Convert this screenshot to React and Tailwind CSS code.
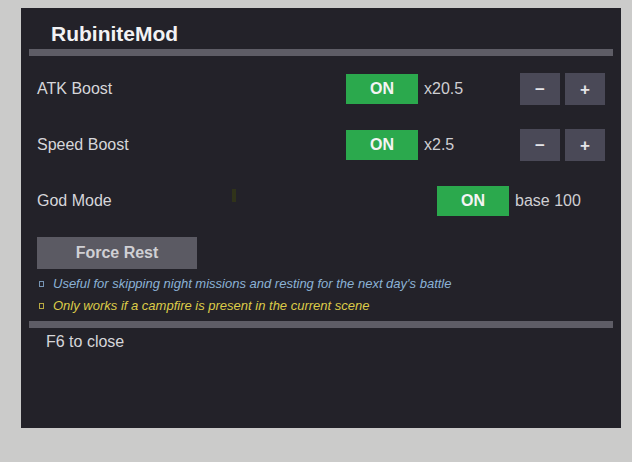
import React, { useState } from "react";

const font = { fontFamily: '"Liberation Sans", Arial, sans-serif' };

const StepButton = ({ label, onClick }) => (
  <button
    type="button"
    onClick={onClick}
    className="flex h-8 w-10 items-center justify-center bg-[#4a4957] text-[17px] font-bold leading-none text-[#e4e4e8]"
  >
    {label}
  </button>
);

const Toggle = ({ on, onClick }) => (
  <button
    type="button"
    onClick={onClick}
    className={`flex h-[30px] w-[72px] items-center justify-center text-[16px] font-bold text-[#f4f4f4] ${
      on ? "bg-[#2ba94d]" : "bg-[#5b5a63]"
    }`}
  >
    {on ? "ON" : "OFF"}
  </button>
);

const BoostRow = ({ label, value, step }) => {
  const [on, setOn] = useState(true);
  const [mult, setMult] = useState(value);

  return (
    <div className="flex h-8 items-center pl-4 pr-4">
      <span className="flex-1 text-[16px] text-[#d6d6da]">{label}</span>
      <Toggle on={on} onClick={() => setOn((v) => !v)} />
      <span className="ml-[6px] w-[96px] text-[16px] text-[#cfcfd3]">x{mult.toFixed(1)}</span>
      <div className="flex gap-[5px]">
        <StepButton label="−" onClick={() => setMult((m) => Math.max(step, m - step))} />
        <StepButton label="+" onClick={() => setMult((m) => m + step)} />
      </div>
    </div>
  );
};

const Note = ({ color, children }) => (
  <div className={`flex items-center pl-[18px] text-[13px] italic leading-4 ${color}`}>
    <span className="mr-[9px] inline-block h-[6px] w-[5px] border border-current opacity-80" />
    {children}
  </div>
);

export default function App() {
  const [god, setGod] = useState(true);

  return (
    <div className="h-[462px] w-[632px] overflow-hidden bg-[#cbcbca] pl-[21px] pt-2" style={font}>
      <div className="relative flex h-[420px] w-[600px] flex-col bg-[#232229]">
        <h1 className="pl-[30px] pt-3 text-[21px] font-bold leading-7 text-[#f2f2f4]">RubiniteMod</h1>
        <div className="mx-2 mt-px h-[7px] bg-[#5e5d66]" />

        <div className="mt-[17px] flex flex-col gap-6">
          <BoostRow label="ATK Boost" value={20.5} step={0.5} />
          <BoostRow label="Speed Boost" value={2.5} step={0.5} />
          <div className="flex h-8 items-center pl-4 pr-4">
            <span className="flex-1 text-[16px] text-[#d6d6da]">God Mode</span>
            <Toggle on={god} onClick={() => setGod((v) => !v)} />
            <span className="ml-[6px] w-[90px] text-[16px] text-[#cfcfd3]">base 100</span>
          </div>
        </div>

        <div className="absolute left-[211px] top-[181px] h-[13px] w-1 bg-[#30331a]" />

        <button
          type="button"
          className="ml-4 mt-5 h-8 w-40 bg-[#5b5a63] text-[16px] font-bold text-[#d0d0d4]"
        >
          Force Rest
        </button>

        <div className="mt-[7px] flex flex-col gap-[6px]">
          <Note color="text-[#8bb2d6]">Useful for skipping night missions and resting for the next day's battle</Note>
          <Note color="text-[#ddcc48]">Only works if a campfire is present in the current scene</Note>
        </div>

        <div className="mx-2 mt-[7px] h-[7px] bg-[#5e5d66]" />
        <p className="mt-[2px] pl-[25px] text-[16px] leading-6 text-[#d6d6da]">F6 to close</p>
      </div>
    </div>
  );
}
